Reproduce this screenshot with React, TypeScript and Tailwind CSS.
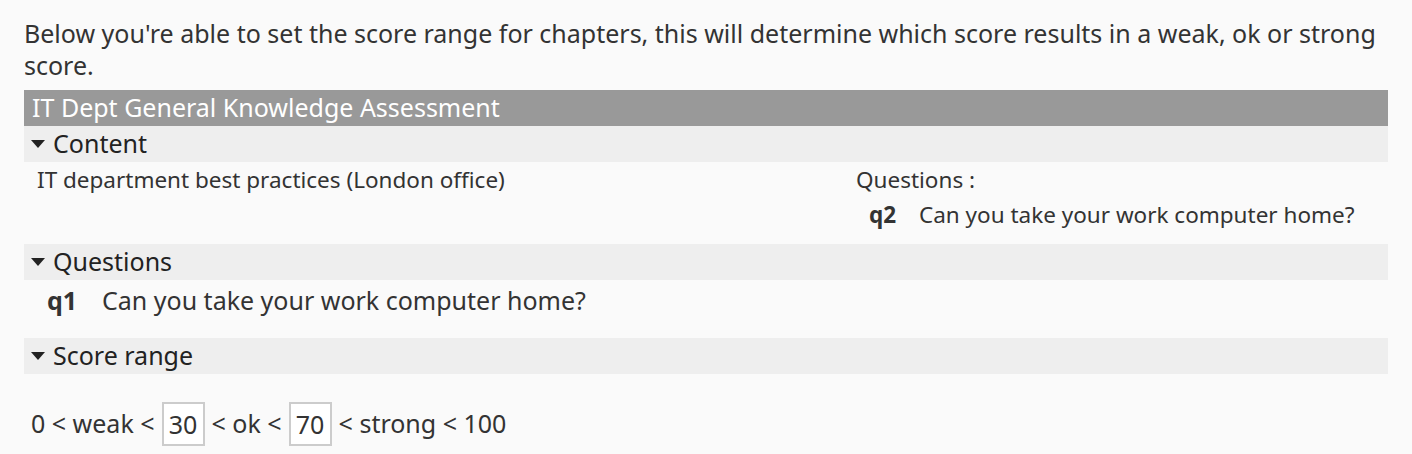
import React from "react";

const Caret: React.FC = () => (
  <svg width="14" height="8" viewBox="0 0 14 8" className="shrink-0">
    <polygon points="0,0 14,0 7,8" fill="#222" />
  </svg>
);

const SectionHeader: React.FC<{ title: string }> = ({ title }) => (
  <div className="flex h-[36px] items-center gap-[8px] bg-[#eeeeee] pl-[7px] text-[25px] text-[#222]">
    <Caret />
    <span>{title}</span>
  </div>
);

const QuestionRow: React.FC<{ code: string; text: string; codeWidth: string }> = ({ code, text, codeWidth }) => (
  <div className="flex items-center">
    <span className={`${codeWidth} font-bold`}>{code}</span>
    <span>{text}</span>
  </div>
);

export default function App() {
  return (
    <div className="min-h-[454px] bg-[#fafafa] px-[24px] pt-[17px] font-['Noto_Sans',sans-serif] text-[#222]">
      <p className="text-[25px] leading-[32px] text-[#333]">
        Below you're able to set the score range for chapters, this will determine which score results in a weak, ok or strong
        score.
      </p>

      <div className="mt-[9px]">
        <div className="flex h-[36px] items-center bg-[#999999] pl-[8px] text-[25px] text-white">
          IT Dept General Knowledge Assessment
        </div>

        <SectionHeader title="Content" />
        <div className="flex h-[82px] text-[22.5px] leading-[30px] text-[#333]">
          <div className="flex-1 pl-[13px] pt-[3px]">IT department best practices (London office)</div>
          <div className="w-[532px] pt-[3px]">
            <div>Questions :</div>
            <div className="mt-[5px] pl-[13px]">
              <QuestionRow code="q2" text="Can you take your work computer home?" codeWidth="w-[50px]" />
            </div>
          </div>
        </div>

        <SectionHeader title="Questions" />
        <div className="flex h-[58px] items-start pl-[23px] pt-[3px] text-[25px] leading-[34px] text-[#333]">
          <QuestionRow code="q1" text="Can you take your work computer home?" codeWidth="w-[55px]" />
        </div>

        <SectionHeader title="Score range" />
        <div className="flex items-center gap-[7px] pl-[7px] pt-[28px] text-[25px] text-[#333]">
          <span>0 &lt; weak &lt;</span>
          <input
            defaultValue="30"
            className="h-[44px] w-[43px] border-2 border-[#cccccc] bg-white text-center outline-none"
          />
          <span>&lt; ok &lt;</span>
          <input
            defaultValue="70"
            className="h-[44px] w-[43px] border-2 border-[#cccccc] bg-white text-center outline-none"
          />
          <span>&lt; strong &lt; 100</span>
        </div>
      </div>
    </div>
  );
}
